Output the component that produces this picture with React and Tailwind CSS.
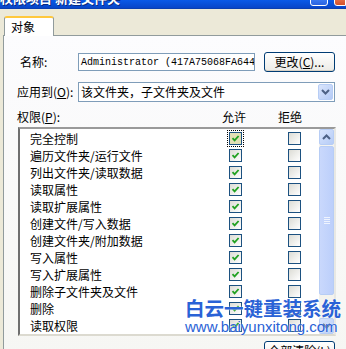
import React from "react";

const CJK = { fontFamily: '"Noto Sans CJK SC", "Noto Sans", sans-serif' };

function Check({ checked, focus }) {
  const box = (
    <div
      className={
        "w-[13px] h-[13px] border border-[#1c5180] flex items-center justify-center " +
        (focus
          ? "bg-[#e2dfb4]"
          : "bg-gradient-to-br from-[#dcdcd5] to-[#ffffff]")
      }
    >
      {checked && (
        <svg width="9" height="9" viewBox="0 0 9 9">
          <path d="M1.5 4.2 L3.6 6.4 L7.6 2" fill="none" stroke="#21a121" strokeWidth="1.8" />
        </svg>
      )}
    </div>
  );
  if (focus) {
    return (
      <div className="w-[17px] h-[17px] -m-[2px] border border-dotted border-black flex items-center justify-center">
        {box}
      </div>
    );
  }
  return box;
}

const rows = [
  "完全控制",
  "遍历文件夹/运行文件",
  "列出文件夹/读取数据",
  "读取属性",
  "读取扩展属性",
  "创建文件/写入数据",
  "创建文件夹/附加数据",
  "写入属性",
  "写入扩展属性",
  "删除子文件夹及文件",
  "删除",
  "读取权限",
];

function XPButton({ children, className = "" }) {
  return (
    <div
      className={
        "h-[20px] w-[71px] rounded-[3px] border border-[#003c74] bg-gradient-to-b from-[#ffffff] to-[#ecebe6] flex items-center justify-center text-[12px] text-black leading-none shadow-[inset_0_-1px_0_#d6d0c5] " +
        className
      }
    >
      {children}
    </div>
  );
}

function Arrow({ up }) {
  return (
    <div className="h-[16px] w-[15px] rounded-[2px] border border-[#b7cdf5] bg-gradient-to-br from-[#d8e4fc] to-[#b6ccf7] flex items-center justify-center">
      <svg width="9" height="6" viewBox="0 0 9 6">
        <path
          d={up ? "M1 5 L4.5 1.5 L8 5" : "M1 1 L4.5 4.5 L8 1"}
          fill="none"
          stroke="#4d6185"
          strokeWidth="2"
        />
      </svg>
    </div>
  );
}

export default function App() {
  return (
    <div className="w-[346px] h-[349px] overflow-hidden bg-[#ece9d8] relative" style={CJK}>
      {/* title bar */}
      <div className="h-[9px] bg-gradient-to-b from-[#0a5ae8] to-[#0845c8] border-b border-[#0a3fb0] flex justify-between overflow-hidden relative">
        <div className="-mt-[10px] ml-0 text-white font-bold text-[13px] leading-[15px] whitespace-nowrap [text-shadow:1px_1px_0_#0a2a80]">
          权限项目&nbsp;新建文件夹
        </div>
        <div className="flex">
          <div className="w-[18px] h-[8px] -mt-[2px] rounded-b-[3px] border border-white bg-gradient-to-b from-[#3d7df5] to-[#2a62e0]" />
          <div className="w-[12px] h-[8px] -mt-[2px] ml-[6px] rounded-bl-[3px] border border-white bg-gradient-to-b from-[#e6704a] to-[#d2502a]" />
        </div>
      </div>

      {/* body */}
      <div className="pl-[3px] pt-[7px]">
        {/* tab */}
        <div className="ml-[1px] w-[50px] h-[20px] relative z-10 bg-white border-l border-r border-[#919b9c] rounded-t-[3px] border-t-[2px] border-t-[#ffc83c] flex items-center pl-[6px] text-[12px] text-black leading-none">
          对象
        </div>
        {/* panel */}
        <div className="-mt-[1px] border-l border-t border-[#919b9c] bg-gradient-to-b from-[#fcfcfe] to-[#f6f6f3] h-[320px] pl-[13px] pt-[16px] text-[12px] text-black">
          {/* name row */}
          <div className="flex items-center h-[20px]">
            <div className="w-[61px] pl-[3px]">名称:</div>
            <div
              className="w-[177px] h-[18px] border border-[#7f9db9] bg-white flex items-center pl-[2px] text-[10px] whitespace-nowrap overflow-hidden"
              style={{ fontFamily: '"Liberation Mono", monospace' }}
            >
              Administrator (417A75068FA644
            </div>
            <XPButton className="ml-[9px]">
              更改(<span className="underline">C</span>)...
            </XPButton>
          </div>
          {/* apply row */}
          <div className="flex items-center h-[20px] mt-[10px]">
            <div className="w-[61px] whitespace-nowrap">
              应用到(<span className="underline">O</span>):
            </div>
            <div className="w-[257px] h-[20px] border border-[#7f9db9] bg-white flex items-center justify-between pl-[2px] pr-[1px]">
              <span>该文件夹，子文件夹及文件</span>
              <div className="h-[16px] w-[15px] rounded-[2px] border border-[#b7cdf5] bg-gradient-to-br from-[#dae5fc] to-[#b4caf6] flex items-center justify-center">
                <svg width="9" height="6" viewBox="0 0 9 6">
                  <path d="M1 1 L4.5 4.5 L8 1" fill="none" stroke="#4d6185" strokeWidth="2" />
                </svg>
              </div>
            </div>
          </div>
          {/* header */}
          <div className="flex items-center h-[16px] mt-[7px]">
            <div className="w-[205px]">
              权限(<span className="underline">P</span>):
            </div>
            <div className="w-[56px]">允许</div>
            <div>拒绝</div>
          </div>
          {/* list */}
          <div className="mt-[2px] ml-[1px] w-[318px] h-[209px] border-[2px] border-t-[#9a9a9a] border-l-[#6f6f6f] border-r-[#e8e8e4] border-b-[#dcdad0] bg-white flex">
            <div className="flex-1 pt-[1px]">
              {rows.map((r, i) => (
                <div key={r} className="h-[17px] flex items-center">
                  <div className="w-[209px] pl-[10px] whitespace-nowrap">{r}</div>
                  <Check checked focus={i === 0} />
                  <div className="w-[46px]" />
                  <Check checked={false} />
                </div>
              ))}
            </div>
            <div className="w-[15px] flex flex-col bg-[#f4f3ee]">
              <Arrow up />
              <div className="mt-[1px] h-[149px] rounded-[2px] border border-[#b7cdf5] bg-gradient-to-r from-[#c9d8fc] to-[#bccffb] flex items-center justify-center">
                <div className="flex flex-col gap-[1px]">
                  <div className="w-[6px] h-[1px] bg-[#eef3fe]" />
                  <div className="w-[6px] h-[1px] bg-[#eef3fe]" />
                  <div className="w-[6px] h-[1px] bg-[#eef3fe]" />
                  <div className="w-[6px] h-[1px] bg-[#eef3fe]" />
                </div>
              </div>
              <div className="flex-1" />
              <Arrow />
            </div>
          </div>
          {/* bottom button */}
          <div className="mt-[5px] ml-[247px]">
            <XPButton>
              全部清除(<span className="underline">L</span>)
            </XPButton>
          </div>
        </div>
      </div>

      {/* watermark */}
      <div className="absolute left-[185px] top-[298px] pointer-events-none text-[#2a62d6]">
        <div className="text-[19.5px] leading-[20px] font-bold whitespace-nowrap [text-shadow:0_0_2px_#ffffff]">
          白云一键重装系统
        </div>
        <div
          className="text-[15px] leading-[17px] whitespace-nowrap [text-shadow:0_0_2px_#ffffff]"
          style={{ fontFamily: '"Liberation Sans", Arial, sans-serif' }}
        >
          www.baiyunxitong.com
        </div>
      </div>
    </div>
  );
}
